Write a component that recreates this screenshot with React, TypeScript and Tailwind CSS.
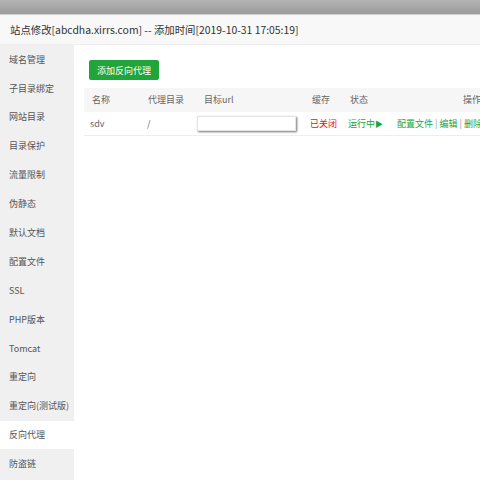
import React from "react";

const menu = [
	"域名管理",
	"子目录绑定",
	"网站目录",
	"目录保护",
	"流量限制",
	"伪静态",
	"默认文档",
	"配置文件",
	"SSL",
	"PHP版本",
	"Tomcat",
	"重定向",
	"重定向(测试版)",
	"反向代理",
	"防盗链",
];

const font = { fontFamily: '"Noto Sans CJK SC", "Liberation Sans", sans-serif' };

const App: React.FC = () => {
	return (
		<div className="w-[480px] h-[480px] overflow-hidden bg-white flex flex-col" style={font}>
			{/* window top strip */}
			<div className="h-[15px] shrink-0 bg-gradient-to-b from-[#b3b3b3] to-[#9c9c9c] border-b border-[#d0d0d0]" />

			<div className="h-[30px] shrink-0 bg-[#f8f8f8] border-b border-[#eeeeee] flex items-center pl-[10px] text-[10.4px] text-[#333] whitespace-nowrap">
				站点修改[abcdha.xirrs.com] -- 添加时间[2019-10-31 17:05:19]
			</div>

			<div className="flex flex-1 min-h-0">
				<div className="w-[74px] shrink-0 bg-[#f0f0f0] flex flex-col">
					{menu.map((m) => (
						<div
							key={m}
							className={
								"h-[28.9px] shrink-0 flex items-center pl-[9px] text-[9px] text-[#555] whitespace-nowrap " +
								(m === "反向代理" ? "bg-white" : "")
							}
						>
							{m}
						</div>
					))}
				</div>

				<div className="flex-1 min-w-0 pl-[10px] pt-[15px] overflow-hidden">
					<button className="block ml-[5px] h-[20px] px-[8px] rounded-[2px] bg-[#20a53a] text-white text-[9px] leading-none">
						添加反向代理
					</button>

					<div className="mt-[8px] w-[430px] text-[9px] text-[#666]">
						<div className="h-[24px] bg-[#f6f6f6] flex items-center whitespace-nowrap">
							<div className="w-[56px] pl-[8px]">名称</div>
							<div className="w-[56px] pl-[8px]">代理目录</div>
							<div className="w-[108px] pl-[8px]">目标url</div>
							<div className="w-[38px] pl-[8px]">缓存</div>
							<div className="w-[50px] pl-[8px]">状态</div>
							<div className="flex-1 pl-[71px]">操作</div>
						</div>
						<div className="h-[24px] border-b border-[#eeeeee] flex items-center whitespace-nowrap">
							<div className="w-[56px] pl-[6px]">sdv</div>
							<div className="w-[56px] pl-[7px]">/</div>
							<div className="w-[108px] pl-[1px]">
								<div className="w-[99px] h-[15px] bg-white border border-[#e4e4e4] shadow-[1px_1px_2px_rgba(0,0,0,0.55)]" />
							</div>
							<div className="w-[38px] pl-[6px] text-[#ef0808]">已关闭</div>
							<div className="w-[50px] pl-[6px] text-[#20a53a]">
								运行中<span className="text-[8px]">▶</span>
							</div>
							<div className="flex-1 pl-[5px] text-[#20a53a]">
								配置文件<span className="text-[#999] mx-[2px]">|</span>编辑<span className="text-[#999] mx-[2px]">|</span>删除
							</div>
						</div>
					</div>
				</div>
			</div>
		</div>
	);
};

export default App;
